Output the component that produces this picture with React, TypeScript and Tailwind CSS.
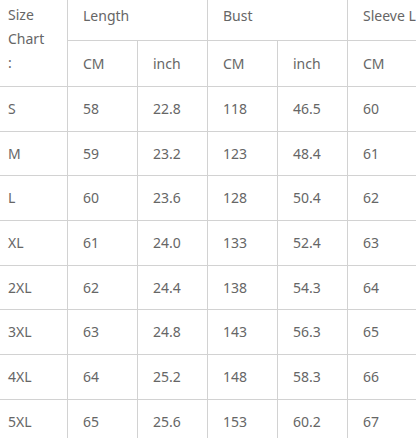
const groups = ["Length", "Bust", "Sleeve Length"];

const rows: [string, string, string, string, string, string][] = [
  ["S", "58", "22.8", "118", "46.5", "60"],
  ["M", "59", "23.2", "123", "48.4", "61"],
  ["L", "60", "23.6", "128", "50.4", "62"],
  ["XL", "61", "24.0", "133", "52.4", "63"],
  ["2XL", "62", "24.4", "138", "54.3", "64"],
  ["3XL", "63", "24.8", "143", "56.3", "65"],
  ["4XL", "64", "25.2", "148", "58.3", "66"],
  ["5XL", "65", "25.6", "153", "60.2", "67"],
];

const cell = "flex items-center border-r border-b border-[#d2d2d2] pl-[15px]";

export default function App() {
  return (
    <div
      className="w-[416px] h-[438px] overflow-hidden bg-white text-[14px] leading-[24px] text-[#666]"
      style={{ fontFamily: '"Noto Sans", "Open Sans", sans-serif' }}
    >
      <div className="-ml-[2px] -mt-[8px] grid w-[490px] grid-cols-[70px_70px_70px_70px_70px_70px_70px] grid-rows-[49px_46px_repeat(8,44.7px)]">
        <div className="row-span-2 flex items-center border-r border-b border-[#d2d2d2] pl-[10px]">
          <span>
            Size
            <br />
            Chart
            <br />:
          </span>
        </div>
        {groups.map((g) => (
          <div key={g} className={`col-span-2 whitespace-nowrap ${cell}`}>
            {g}
          </div>
        ))}
        {groups.map((g) => (
          <div key={g + "-units"} className="contents">
            <div className={cell}>CM</div>
            <div className={cell}>inch</div>
          </div>
        ))}
        {rows.map((r) => (
          <div key={r[0]} className="contents">
            <div className="flex items-center border-r border-b border-[#d2d2d2] pl-[10px]">{r[0]}</div>
            {r.slice(1).map((v, i) => (
              <div key={i} className={cell}>
                {v}
              </div>
            ))}
            <div className={cell}></div>
          </div>
        ))}
      </div>
    </div>
  );
}
